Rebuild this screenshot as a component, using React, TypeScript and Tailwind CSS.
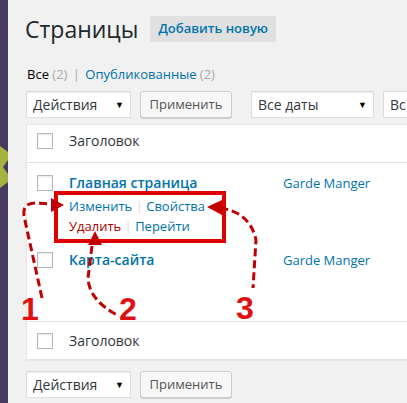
import { ReactNode } from "react";

function Select({ label, width }: { label: string; width: string }) {
  return (
    <div
      className={`${width} h-[27px] shrink-0 bg-white border border-[#ddd] shadow-[inset_0_1px_2px_rgba(0,0,0,0.07)] flex items-center pl-[6px] pr-[6px] text-[14px] text-[#32373c]`}
    >
      <span className="flex-1 whitespace-nowrap overflow-hidden">{label}</span>
      <span className="text-[9px] text-black">▼</span>
    </div>
  );
}

function Apply() {
  return (
    <div className="w-[92px] h-[27px] shrink-0 bg-[#f7f7f7] border border-[#ccc] rounded-[3px] shadow-[0_1px_0_#ccc] flex items-center justify-center text-[13px] text-[#555]">
      Применить
    </div>
  );
}

function Check() {
  return <div className="w-[16px] h-[16px] bg-white border border-[#b4b9be] shadow-[inset_0_1px_2px_rgba(0,0,0,0.1)]" />;
}

function Row({ h, pt, children, author, border }: { h: string; pt: string; children: ReactNode; author?: string; border?: string }) {
  return (
    <div className={`flex ${h} ${pt} ${border ?? ""}`}>
      <div className="w-[42px] shrink-0 pl-[10px] pt-[2px]">
        <Check />
      </div>
      <div className="w-[214px] shrink-0">{children}</div>
      <div className="text-[13px] leading-[20px] text-[#0073aa]">{author}</div>
    </div>
  );
}

export default function App() {
  return (
    <div className="relative w-[407px] h-[403px] overflow-hidden bg-[#f1f1f1] flex" style={{ fontFamily: '"Open Sans", sans-serif' }}>
      <div className="w-[8px] shrink-0 bg-[#463b5e] flex flex-col pt-[146px]">
        <svg width="8" height="42" viewBox="0 0 8 42">
          <path d="M0,0 L8,6 L8,14 L3,21 L8,28 L8,36 L0,42 Z" fill="#a3b33e" />
        </svg>
      </div>

      <div className="flex-1 pl-[18px]">
        <div className="pt-[14px] flex items-center gap-[12px]">
          <h1 className="text-[23px] leading-[30px] text-[#23282d] -ml-[1px]">Страницы</h1>
          <div className="h-[26px] px-[8px] bg-[#e0e0e0] text-[#0073aa] text-[13px] font-semibold flex items-center">Добавить новую</div>
        </div>

        <div className="mt-[20px] pl-[1px] text-[13px] leading-[20px] text-[#aaa] whitespace-nowrap">
          <span className="text-[#000]">Все</span> (2) <span className="mx-[2px]">|</span>{" "}
          <span className="text-[#0073aa]">Опубликованные</span> (2)
        </div>

        <div className="mt-[7px] flex items-center">
          <Select label="Действия" width="w-[105px]" />
          <div className="ml-[9px]"><Apply /></div>
          <div className="ml-[19px]"><Select label="Все даты" width="w-[123px]" /></div>
          <div className="ml-[9px] w-[24px] overflow-hidden">
            <div className="w-[24px] h-[27px] bg-white border border-[#ddd] border-r-0 pl-[6px] flex items-center text-[14px] text-[#32373c] whitespace-nowrap overflow-hidden">
              Вс
            </div>
          </div>
        </div>

        <div className="mt-[6px] w-[420px] bg-white border border-[#e5e5e5] shadow-[0_1px_1px_rgba(0,0,0,0.04)]">
          <Row h="h-[38px]" pt="pt-[6px]" border="border-b border-[#e1e1e1]">
            <div className="text-[14px] leading-[20px] text-[#32373c]">Заголовок</div>
          </Row>
          <Row h="h-[80px]" pt="pt-[10px]" author="Garde Manger">
            <div className="text-[14px] leading-[20px] font-semibold text-[#0073aa]">Главная страница</div>
            <div className="mt-[3px] text-[13px] leading-[20px] text-[#0073aa] whitespace-nowrap">
              Изменить <span className="text-[#ddd]">|</span> Свойства
            </div>
            <div className="text-[13px] leading-[20px] whitespace-nowrap">
              <span className="text-[#a00]">Удалить</span> <span className="text-[#ddd]">|</span>{" "}
              <span className="text-[#0073aa]">Перейти</span>
            </div>
          </Row>
          <Row h="h-[78px]" pt="pt-[7px]" author="Garde Manger">
            <div className="text-[14px] leading-[20px] font-semibold text-[#0073aa]">Карта-сайта</div>
          </Row>
          <Row h="h-[38px]" pt="pt-[9px]" border="border-t border-[#e1e1e1]">
            <div className="text-[14px] leading-[20px] text-[#32373c]">Заголовок</div>
          </Row>
        </div>

        <div className="mt-[11px] flex items-center">
          <Select label="Действия" width="w-[105px]" />
          <div className="ml-[9px]"><Apply /></div>
        </div>
      </div>

      <svg className="absolute left-0 top-0 pointer-events-none" width="407" height="403" viewBox="0 0 407 403">
        <rect x="56" y="193" width="168" height="48" fill="none" stroke="#e00000" strokeWidth="4" />
        <g fill="none" stroke="#c00000" strokeWidth="3" strokeDasharray="8 4">
          <path d="M42,298 L24,216 Q22,203 36,203 L52,204" />
          <path d="M92,246 L88,278 Q89,300 117,315" />
          <path d="M220,208 Q250,212 256,240 L253,288" />
        </g>
        <g fill="#c00000">
          <path d="M64,205 L51,198 L51,212 Z" />
          <path d="M95,231 L88,245 L102,245 Z" />
          <path d="M207,207 L222,200 L222,215 Z" />
        </g>
        <g fill="#e01010" fontFamily="Liberation Sans, sans-serif" fontWeight="bold" fontSize="32">
          <text x="21" y="320">1</text>
          <text x="119" y="320">2</text>
          <text x="236" y="319">3</text>
        </g>
      </svg>
    </div>
  );
}
